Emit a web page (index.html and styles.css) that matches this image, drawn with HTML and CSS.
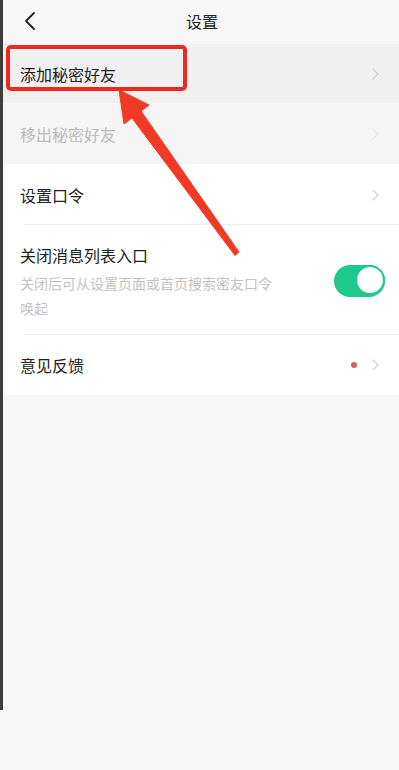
FILE: index.html
```html
<!DOCTYPE html>
<html lang="zh-CN">
<head>
    <meta charset="UTF-8">
    <meta name="viewport" content="width=device-width, initial-scale=1.0">
    <title>设置</title>
    <link rel="stylesheet" href="styles.css">
</head>
<body>
    <div class="frame">
        <div class="header">
            <svg class="back" width="14" height="20" viewBox="0 0 14 20">
                <path d="M11 2 L3 10 L11 18" fill="none" stroke="#222" stroke-width="1.8" stroke-linecap="round" stroke-linejoin="round"/>
            </svg>
            <span class="title">设置</span>
        </div>

        <div class="row row-pressed">
            <span class="label">添加秘密好友</span>
            <span class="chevron"></span>
        </div>
        <div class="row row-disabled">
            <span class="label">移出秘密好友</span>
            <span class="chevron"></span>
        </div>

        <div class="group">
            <div class="row row-line">
                <span class="label">设置口令</span>
                <span class="chevron"></span>
            </div>
            <div class="row row-tall row-line">
                <div class="text">
                    <span class="label">关闭消息列表入口</span>
                    <span class="desc">关闭后可从设置页面或首页搜索密友口令唤起</span>
                </div>
                <span class="switch on"></span>
            </div>
            <div class="row">
                <span class="label">意见反馈</span>
                <span class="right">
                    <span class="dot"></span>
                    <span class="chevron"></span>
                </span>
            </div>
        </div>

        <!-- annotation drawn over the page -->
        <div class="mark"></div>
        <svg class="arrow" width="399" height="300" viewBox="0 0 399 300">
            <polygon points="119,90 149,105 141,111 239,252 235,255.5 132,118 124,124" fill="#f03a25" stroke="#f03a25" stroke-width="1" stroke-linejoin="round"/>
        </svg>
    </div>
</body>
</html>
```

FILE: styles.css
```css
/* Page */
html, body {
  margin: 0;
  padding: 0;
  background-color: #f7f7f7;
}

body {
  font-family: "Noto Sans CJK SC", "Noto Sans", sans-serif;
  color: #222;
  height: 770px;
}

.frame {
  position: relative;
  height: 710px;
  border-left: 3px solid #3c3c3c;
}

/* Header */
.header {
  height: 44px;
  display: flex;
  align-items: center;
  justify-content: center;
  position: relative;
  background-color: #f7f7f7;
}

.back {
  position: absolute;
  left: 20px;
  top: 11px;
}

.title {
  font-size: 16px;
  margin-left: 2px;
  margin-top: -2px;
}

/* Rows */
.row {
  display: flex;
  align-items: center;
  justify-content: space-between;
  height: 60px;
  padding: 0 20px 0 17px;
  position: relative;
}

.label {
  font-size: 16px;
}

.row-pressed {
  height: 59px;
  background-color: #f0f0f0;
}

.row-disabled {
  height: 61px;
  background-color: #f5f5f5;
}

.row-disabled .label {
  color: #bcbcbc;
}

.row-disabled .chevron {
  border-color: #e6e6e6;
}

.group {
  background-color: #fff;
}

.group .row:first-child {
  height: 61px;
}

.row-line::after {
  content: "";
  position: absolute;
  left: 21px;
  right: 0;
  bottom: 0;
  height: 1px;
  background-color: #eee;
}

.row-tall {
  height: 110px;
}

.text {
  display: flex;
  flex-direction: column;
  margin-top: 4px;
}

.desc {
  font-size: 14px;
  color: #c2c2c2;
  line-height: 25px;
  max-width: 265px;
  margin-top: 4px;
}

/* Chevron */
.chevron {
  width: 7px;
  height: 7px;
  border-top: 1.5px solid #ccc;
  border-right: 1.5px solid #ccc;
  transform: rotate(45deg);
  margin-right: 2px;
}

.right {
  display: flex;
  align-items: center;
  gap: 12px;
}

.dot {
  width: 6px;
  height: 6px;
  border-radius: 50%;
  background-color: #d9605a;
}

/* Switch */
.switch {
  width: 51px;
  height: 32px;
  border-radius: 16px;
  background-color: #1fc98b;
  position: relative;
  margin-right: -6px;
  margin-top: 2px;
}

.switch::after {
  content: "";
  position: absolute;
  right: 1px;
  top: 1px;
  width: 26px;
  height: 26px;
  border-radius: 50%;
  background-color: #fff;
  border: 2px solid #1fc98b;
  box-sizing: content-box;
  margin: -1px;
}

/* Annotation */
.mark {
  position: absolute;
  left: 3px;
  top: 45px;
  width: 173px;
  height: 38px;
  border: 4px solid #f2281e;
  border-radius: 5px;
}

.arrow {
  position: absolute;
  left: -3px;
  top: 0;
}
```
